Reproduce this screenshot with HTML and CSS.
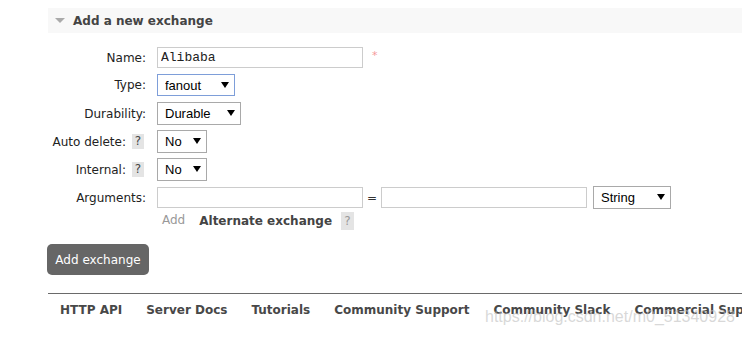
FILE: index.html
```html
<!DOCTYPE html>
<html lang="en">
<head>
    <meta charset="UTF-8">
    <meta name="viewport" content="width=device-width, initial-scale=1.0">
    <title>Add a new exchange</title>
    <link rel="stylesheet" href="styles.css">
</head>
<body>

    <div class="page">
        <h2 class="section-head"><span class="arrow"></span>Add a new exchange</h2>

        <form class="form" action="#" method="POST">
            <!-- Name -->
            <div class="row row-name">
                <label class="label" for="ex-name">Name:</label>
                <input type="text" id="ex-name" class="text-input" value="Alibaba">
                <span class="req">*</span>
            </div>

            <!-- Type -->
            <div class="row">
                <label class="label" for="ex-type">Type:</label>
                <span class="select focused">
                    <select id="ex-type" class="w-type">
                        <option>fanout</option>
                        <option>direct</option>
                        <option>headers</option>
                        <option>topic</option>
                    </select>
                </span>
            </div>

            <!-- Durability -->
            <div class="row">
                <label class="label" for="ex-durable">Durability:</label>
                <span class="select">
                    <select id="ex-durable" class="w-durable">
                        <option>Durable</option>
                        <option>Transient</option>
                    </select>
                </span>
            </div>

            <!-- Auto delete -->
            <div class="row">
                <label class="label" for="ex-auto">Auto delete:<span class="help">?</span></label>
                <span class="select">
                    <select id="ex-auto" class="w-bool">
                        <option>No</option>
                        <option>Yes</option>
                    </select>
                </span>
            </div>

            <!-- Internal -->
            <div class="row">
                <label class="label" for="ex-internal">Internal:<span class="help">?</span></label>
                <span class="select">
                    <select id="ex-internal" class="w-bool">
                        <option>No</option>
                        <option>Yes</option>
                    </select>
                </span>
            </div>

            <!-- Arguments -->
            <div class="row row-args">
                <label class="label" for="arg-key">Arguments:</label>
                <input type="text" id="arg-key" class="text-input">
                <span class="equals">=</span>
                <input type="text" class="text-input">
                <span class="select select-type">
                    <select class="w-type">
                        <option>String</option>
                        <option>Number</option>
                        <option>Boolean</option>
                        <option>List</option>
                    </select>
                </span>
            </div>

            <div class="add-row">
                <span class="add-link">Add</span>
                <span class="alt-exchange">Alternate exchange</span>
                <span class="help help-light">?</span>
            </div>

            <button type="submit" class="add-button">Add exchange</button>
        </form>

        <div class="footer">
            <a href="#">HTTP API</a>
            <a href="#">Server Docs</a>
            <a href="#">Tutorials</a>
            <a href="#">Community Support</a>
            <a href="#">Community Slack</a>
            <a href="#">Commercial Support</a>
        </div>
    </div>

    <div class="watermark">https://blog.csdn.net/m0_51340928</div>

</body>
</html>
```

FILE: styles.css
```css
/* General Styles */
* {
    box-sizing: border-box;
}

html, body {
    margin: 0;
    padding: 0;
    overflow: hidden;
}

body {
    font-family: Verdana, "DejaVu Sans", sans-serif;
    font-size: 12px;
    color: #484848;
    background: #fff;
    width: 742px;
    height: 337px;
    position: relative;
}

.page {
    padding: 8px 0 0 48px;
}

/* Section header */
.section-head {
    margin: 0;
    height: 25px;
    background: #f8f8f8;
    font-size: 12px;
    font-weight: bold;
    color: #444;
    display: flex;
    align-items: center;
    padding-left: 7px;
}

.arrow {
    width: 0;
    height: 0;
    border-left: 5px solid transparent;
    border-right: 5px solid transparent;
    border-top: 5px solid #aaa;
    margin-right: 8px;
}

/* Form rows */
.form {
    padding-top: 14px;
}

.row {
    display: flex;
    align-items: center;
    margin-bottom: 5px;
}

.row-name {
    margin-bottom: 6px;
}

.row:nth-child(2) {
    margin-bottom: 6px;
}

.label {
    width: 109px;
    padding-right: 11px;
    display: flex;
    justify-content: flex-end;
    align-items: center;
    color: #222;
}

.help {
    display: inline-block;
    width: 12px;
    height: 15px;
    line-height: 15px;
    margin-left: 6px;
    margin-right: 2px;
    background: #e4e4e4;
    color: #444;
    text-align: center;
    font-size: 12px;
}

.help-light {
    width: 13px;
    height: 18px;
    line-height: 18px;
    color: #999;
    margin-left: 9px;
}

.text-input {
    width: 206px;
    height: 21px;
    border: 1px solid #ccc;
    padding: 0 3px;
    font-family: "Liberation Mono", monospace;
    font-size: 13px;
    color: #222;
    outline: none;
}

.req {
    color: #f59a9a;
    margin-left: 9px;
    align-self: flex-start;
    margin-top: 2px;
    font-size: 11px;
}

/* Select boxes */
.select {
    position: relative;
    display: inline-block;
    height: 23px;
}

.select select {
    appearance: none;
    -webkit-appearance: none;
    display: block;
    height: 23px;
    border: 1px solid #a9a9a9;
    border-radius: 0;
    background: #fff;
    padding: 0 0 0 7px;
    font-family: "Liberation Sans", Arial, sans-serif;
    font-size: 13px;
    color: #000;
    outline: none;
}

.select::after {
    content: "";
    position: absolute;
    right: 6px;
    top: 8px;
    border-left: 4px solid transparent;
    border-right: 4px solid transparent;
    border-top: 6px solid #000;
    pointer-events: none;
}

.select.focused {
    height: 22px;
}

.select.focused select {
    height: 22px;
    border-color: #7e9ed9;
}

.w-type {
    width: 78px;
}

.w-durable {
    width: 84px;
}

.w-bool {
    width: 50px;
}

.equals {
    width: 18px;
    text-align: center;
    color: #333;
}

.select-type {
    margin-left: 6px;
}

/* Add row */
.add-row {
    display: flex;
    align-items: center;
    margin-left: 114px;
    margin-top: -2px;
    height: 18px;
}

.add-link {
    color: #999;
    margin-top: -3px;
}

.alt-exchange {
    margin-left: 14px;
    font-weight: bold;
    color: #444;
}

/* Button */
.add-button {
    display: block;
    margin: 14px 0 0 -1px;
    width: 102px;
    height: 31px;
    border: none;
    border-radius: 5px;
    background: #666;
    color: #fff;
    font-family: Verdana, "DejaVu Sans", sans-serif;
    font-size: 12px;
    padding: 0;
    cursor: pointer;
}

/* Footer */
.footer {
    margin-top: 18px;
    border-top: 1px solid #6a6a6a;
    display: flex;
    white-space: nowrap;
    padding-top: 9px;
}

.footer a {
    padding: 0 12px;
    font-weight: bold;
    color: #484848;
    text-decoration: none;
}

.watermark {
    position: absolute;
    left: 485px;
    top: 308px;
    font-family: "Liberation Sans", Arial, sans-serif;
    font-size: 16px;
    color: rgba(190, 190, 190, 0.6);
    white-space: nowrap;
}
```
